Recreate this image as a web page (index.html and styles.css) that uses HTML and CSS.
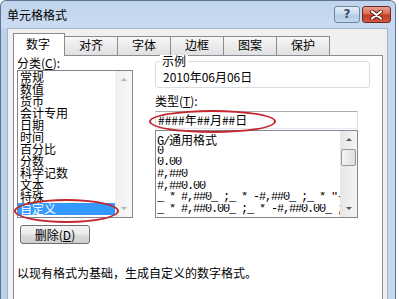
FILE: index.html
```html
<!DOCTYPE html>
<html lang="zh-CN">
<head>
<meta charset="utf-8">
<title>单元格格式</title>
<link rel="stylesheet" href="styles.css">
</head>
<body>
<div class="win">
  <div class="titlebar">
    <span class="title">单元格格式</span>
    <span class="cap help">?</span>
    <span class="cap close"><svg width="13" height="10" viewBox="0 0 13 10"><path d="M2 1.5L11 8.5M11 1.5L2 8.5" stroke="#5a2018" stroke-width="4" stroke-linecap="round"/><path d="M2 1.5L11 8.5M11 1.5L2 8.5" stroke="#fff" stroke-width="2.2" stroke-linecap="round"/></svg></span>
  </div>
  <div class="face">
    <div class="tabs">
      <div class="tab active">数字</div>
      <div class="tab">对齐</div>
      <div class="tab">字体</div>
      <div class="tab">边框</div>
      <div class="tab">图案</div>
      <div class="tab">保护</div>
    </div>
    <div class="panel">
      <div class="col-left">
        <div class="lbl">分类(<u>C</u>):</div>
        <div class="listbox cat">
          <ul class="items">
            <li>常规</li>
            <li>数值</li>
            <li>货币</li>
            <li>会计专用</li>
            <li>日期</li>
            <li>时间</li>
            <li>百分比</li>
            <li>分数</li>
            <li>科学记数</li>
            <li>文本</li>
            <li>特殊</li>
            <li class="sel">自定义</li>
          </ul>
          <div class="sbar dis">
            <div class="sbtn"><i class="up"></i></div>
            <div class="strack"></div>
            <div class="sbtn"><i class="down"></i></div>
          </div>
        </div>
        <button class="btn">删除(<u>D</u>)</button>
      </div>
      <div class="col-right">
        <div class="group">
          <span class="legend">示例</span>
          <div class="sample">2010年06月06日</div>
        </div>
        <div class="lbl lbl-type">类型(<u>T</u>):</div>
        <div class="input">####年##月##日</div>
        <div class="listbox fmt">
          <ul class="items">
            <li><span class="m">G/</span>通用格式</li>
            <li class="m">0</li>
            <li class="m">0.00</li>
            <li class="m">#,##0</li>
            <li class="m">#,##0.00</li>
            <li class="m">_ * #,##0_ ;_ * -#,##0_ ;_ * "-"_ ;_ @_ </li>
            <li class="m">_ * #,##0.00_ ;_ * -#,##0.00_ ;_ * "-"??_ ;_ @_ </li>
          </ul>
          <div class="sbar">
            <div class="sbtn"><i class="up"></i></div>
            <div class="strack"><div class="thumb"></div></div>
            <div class="sbtn"><i class="down"></i></div>
          </div>
        </div>
      </div>
      <div class="desc">以现有格式为基础，生成自定义的数字格式。</div>
    </div>
  </div>
  <div class="ell e1"></div>
  <div class="ell e2"></div>
</div>
</body>
</html>
```
FILE: styles.css
```css
* { box-sizing: border-box; margin: 0; padding: 0; }
html, body { width: 399px; height: 299px; overflow: hidden; background: #fff; }
body {
  font-family: "Noto Sans CJK SC", "Noto Sans", sans-serif;
  font-size: 12px;
  color: #000;
}
u { text-decoration: underline; }
ul { list-style: none; }

.win {
  position: relative;
  width: 396px;
  height: 299px;
  overflow: hidden;
  background: linear-gradient(to right, #bcd2ec, #c4d8ef);
  border: 1px solid #5d7391;
  border-bottom: 0;
  border-radius: 6px 6px 0 0;
  padding: 0 7px 0 6px;
}

.titlebar {
  display: flex;
  align-items: flex-start;
  height: 27px;
  margin: 0 -7px 0 -6px;
  padding: 0 4px 0 6px;
  background: linear-gradient(#c0d4ed, #cbdcf1);
  border-radius: 5px 5px 0 0;
}
.title { line-height: 27px; font-size: 12px; color: #000; }
.cap {
  margin-top: 5px;
  height: 17px;
  border-radius: 3px;
  display: flex;
  align-items: center;
  justify-content: center;
}
.help {
  margin-left: auto;
  width: 26px;
  border: 1px solid #6f86a4;
  background: linear-gradient(#e3edf8 0%, #cbdcef 45%, #b5cbe4 55%, #c3d6ec 100%);
  color: #3a4d66;
  font-family: "DejaVu Sans", sans-serif;
  font-weight: bold;
  font-size: 12px;
  line-height: 15px;
}
.close {
  margin-left: 2px;
  width: 29px;
  border: 1px solid #6b2a20;
  background: linear-gradient(#eaa393 0%, #d86a54 45%, #c23a22 55%, #d25a40 100%);
}

.face {
  height: 272px;
  overflow: hidden;
  background: #f0f0f0;
  border: 1px solid #a3b4c8;
  border-bottom: 0;
  padding: 4px 4px 0 5px;
}

.tabs {
  display: flex;
  align-items: flex-end;
  height: 22px;
}
.tab {
  width: 54px;
  height: 19px;
  margin-left: -1px;
  border: 1px solid #898c95;
  border-bottom: 0;
  background: linear-gradient(#f6f6f6, #e0e0e0);
  text-align: center;
  line-height: 16px;
  font-size: 12px;
}
.tab.active {
  position: relative;
  z-index: 1;
  width: 52px;
  height: 23px;
  margin-left: 0;
  margin-bottom: -1px;
  background: #fff;
  padding-top: 2px;
  padding-right: 2px;
}

.panel {
  width: 370px;
  height: 250px;
  background: #fff;
  border: 1px solid #898c95;
  padding: 0 0 0 3px;
  display: grid;
  grid-template-columns: 116px 215px;
  column-gap: 22px;
  align-content: start;
}

.lbl { line-height: 14px; height: 14px; }

.listbox {
  display: flex;
  border: 1px solid #828790;
  background: #fff;
  overflow: hidden;
}
.listbox .items { flex: 1; min-width: 0; }
.cat { height: 148px; }
.cat .items li { line-height: 12px; height: 12px; padding-left: 2px; white-space: nowrap; }
.cat .items li.sel { background: #3399ff; color: #fff; }

.fmt { width: 203px; height: 88px; margin-top: 1px; }
.fmt .items { padding: 3px 0 0 1px; overflow: hidden; }
.fmt .items li { line-height: 11.7px; height: 11.7px; white-space: pre; overflow: hidden; }
.m {
  font-family: "Liberation Mono", monospace;
  font-size: 12px;
  letter-spacing: -1.2px;
}

.sbar {
  width: 17px;
  flex: none;
  display: flex;
  flex-direction: column;
  background: linear-gradient(to right, #e6e6e6, #f4f4f4);
}
.sbar.dis { background: linear-gradient(to right, #efefef, #f8f8f8); }
.sbtn {
  height: 17px;
  display: flex;
  align-items: center;
  justify-content: center;
}
.strack { flex: 1; padding: 1px 1px; }
.thumb {
  height: 17px;
  border: 1px solid #979797;
  border-radius: 2px;
  background: linear-gradient(to right, #f5f5f5, #dedede);
}
.up, .down { display: block; width: 0; height: 0; border-left: 3px solid transparent; border-right: 3px solid transparent; }
.up { border-bottom: 3px solid #5a5a5a; }
.down { border-top: 3px solid #5a5a5a; }
.dis .up { border-bottom-color: #b4b4b4; }
.dis .down { border-top-color: #b4b4b4; }

.btn {
  display: block;
  margin: 7px 0 0 3px;
  width: 70px;
  height: 19px;
  border: 1px solid #707070;
  border-radius: 3px;
  background: linear-gradient(#f3f3f3 0%, #ebebeb 48%, #dcdcdc 52%, #d0d0d0 100%);
  font-family: inherit;
  font-size: 12px;
  line-height: 16px;
  color: #000;
}

.group {
  position: relative;
  margin-top: 5px;
  height: 27px;
  border: 1px solid #d5dfe5;
  border-radius: 3px;
  padding: 9px 0 0 7px;
}
.legend {
  position: absolute;
  top: -7px;
  left: 4px;
  padding: 0 2px;
  background: #fff;
  line-height: 12px;
}
.sample { line-height: 12px; }
.lbl-type { margin-top: 6px; }
.input {
  width: 203px;
  margin-top: 3px;
  height: 18px;
  border: 1px solid #abadb3;
  border-color: #abadb3 #dbdfe6 #e3e9ef #e2e3ea;
  padding-left: 2px;
  line-height: 16px;
}

.desc {
  grid-column: 1 / 3;
  margin-top: 22px;
  line-height: 14px;
}

.ell {
  position: absolute;
  border: 2px solid #c1272d;
  border-radius: 50%;
}
.e1 { left: 13px; top: 198px; width: 105px; height: 24px; }
.e2 { left: 148px; top: 109px; width: 127px; height: 23px; }
```
